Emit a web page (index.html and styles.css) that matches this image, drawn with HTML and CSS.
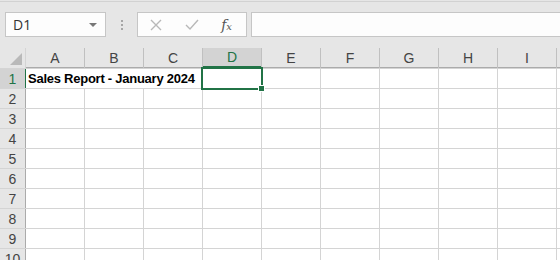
FILE: index.html
```html
<!DOCTYPE html>
<html lang="en">
<head>
    <meta charset="UTF-8">
    <title>Book1 - Excel</title>
    <link rel="stylesheet" href="styles.css">
</head>
<body>
    <div class="formula-bar">
        <div class="name-box">
            <span>D1</span>
            <span class="caret"></span>
        </div>
        <div class="grip"><i></i><i></i><i></i></div>
        <div class="fx-buttons">
            <svg width="14" height="14" viewBox="0 0 14 14"><path d="M2 2 L12 12 M12 2 L2 12" stroke="#b8b8b8" stroke-width="1.4" fill="none"/></svg>
            <svg width="16" height="14" viewBox="0 0 16 14"><path d="M2 7 L6 11 L14 2" stroke="#b8b8b8" stroke-width="1.4" fill="none"/></svg>
            <span class="fx">f<sub>x</sub></span>
        </div>
        <div class="formula-input"></div>
    </div>

    <div class="sheet">
        <div class="corner"></div>
        <div class="col-head">A</div>
        <div class="col-head">B</div>
        <div class="col-head">C</div>
        <div class="col-head active">D</div>
        <div class="col-head">E</div>
        <div class="col-head">F</div>
        <div class="col-head">G</div>
        <div class="col-head">H</div>
        <div class="col-head">I</div>
        <div class="col-head"></div>

        <div class="row-head active">1</div>
        <div class="cell title">Sales Report - January 2024</div>
        <div class="cell selected"></div>
        <div class="cell"></div><div class="cell"></div><div class="cell"></div>
        <div class="cell"></div><div class="cell"></div><div class="cell"></div>
    </div>
    <script>
        // fill in the empty rows 2-10
        const sheet = document.querySelector('.sheet');
        for (let r = 2; r <= 10; r++) {
            const head = document.createElement('div');
            head.className = 'row-head';
            head.textContent = r;
            sheet.appendChild(head);
            for (let c = 0; c < 10; c++) {
                const cell = document.createElement('div');
                cell.className = 'cell';
                sheet.appendChild(cell);
            }
        }
    </script>
</body>
</html>
```

FILE: styles.css
```css
body {
    margin: 0;
    padding: 0;
    width: 560px;
    height: 260px;
    overflow: hidden;
    background-color: #e6e6e6;
    font-family: "Open Sans", "Liberation Sans", Arial, sans-serif;
}
.formula-bar {
    height: 47px;
    box-sizing: border-box;
    border-top: 1px solid #d2d2d2;
    margin-top: 1px;
    padding: 10px 0 0 5px;
    display: flex;
    align-items: flex-start;
}
.name-box {
    width: 101px;
    height: 25px;
    box-sizing: border-box;
    background-color: #fdfdfd;
    border: 1px solid #c6c6c6;
    display: flex;
    align-items: center;
    justify-content: space-between;
    padding: 0 8px 0 7px;
    font-size: 14px;
    color: #333;
}
.caret {
    width: 0;
    height: 0;
    border-left: 4px solid transparent;
    border-right: 4px solid transparent;
    border-top: 4px solid #777;
}
.grip {
    width: 31px;
    height: 25px;
    display: flex;
    flex-direction: column;
    align-items: center;
    justify-content: center;
    gap: 2px;
}
.grip i {
    width: 2px;
    height: 2px;
    background-color: #a6a6a6;
}
.fx-buttons {
    width: 110px;
    height: 25px;
    box-sizing: border-box;
    background-color: #fdfdfd;
    border: 1px solid #c6c6c6;
    display: flex;
    align-items: center;
    padding: 0 14px 0 11px;
    justify-content: space-between;
}
.fx {
    font-family: "DejaVu Serif", "Liberation Serif", serif;
    font-style: italic;
    font-size: 14px;
    color: #555;
    line-height: 1;
}
.fx sub {
    font-size: 10px;
    vertical-align: 0;
}
.formula-input {
    flex: 1;
    margin-left: 4px;
    height: 25px;
    box-sizing: border-box;
    background-color: #fdfdfd;
    border: 1px solid #c6c6c6;
    border-right: none;
}
.sheet {
    display: grid;
    grid-template-columns: 25px repeat(10, 58px);
    grid-template-rows: 20px repeat(10, 19px);
    gap: 1px;
    background-color: #d4d4d4;
    font-family: "Liberation Sans", Arial, sans-serif;
}
.corner {
    background-color: #e6e6e6;
    position: relative;
}
.corner::after {
    content: "";
    position: absolute;
    right: 3px;
    bottom: 3px;
    border-left: 12px solid transparent;
    border-bottom: 12px solid #b9b9b9;
}
.col-head {
    background-color: #e6e6e6;
    border-bottom: 1px solid #ababab;
    box-shadow: 1px 0 0 #c0c0c0;
    color: #444;
    font-size: 14px;
    display: flex;
    align-items: center;
    justify-content: center;
}
.col-head.active {
    background-color: #d3d3d3;
    color: #217346;
    border-bottom: 2px solid #217346;
}
.row-head {
    background-color: #e6e6e6;
    color: #444;
    font-size: 14px;
    display: flex;
    align-items: center;
    justify-content: center;
    box-shadow: 1px 0 0 #ababab;
}
.row-head.active {
    background-color: #d3d3d3;
    color: #217346;
    box-shadow: 1px 0 0 #217346, 2px 0 0 #217346;
}
.cell {
    background-color: #fff;
}
.cell.title {
    grid-column: span 3;
    font-weight: bold;
    font-size: 13px;
    letter-spacing: -0.25px;
    color: #000;
    padding-left: 2px;
    white-space: nowrap;
    display: flex;
    align-items: center;
}
.cell.selected {
    position: relative;
    outline: 2px solid #217346;
    z-index: 1;
}
.cell.selected::after {
    content: "";
    position: absolute;
    right: -4px;
    bottom: -4px;
    width: 5px;
    height: 5px;
    background-color: #217346;
    border: 1px solid #fff;
}
```
